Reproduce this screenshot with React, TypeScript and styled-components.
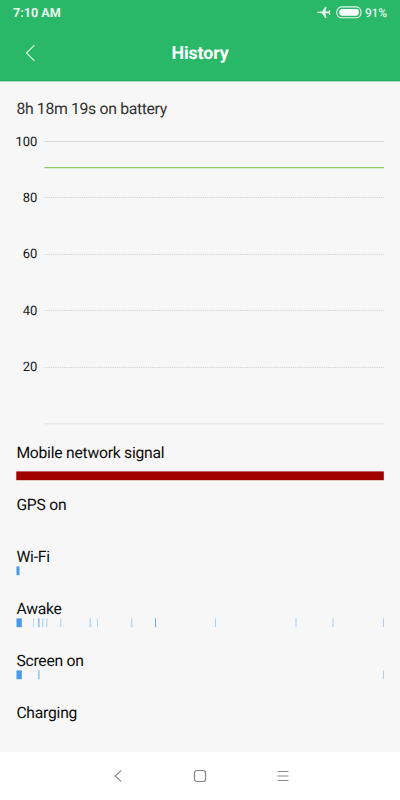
import React from "react";
import styled, { createGlobalStyle } from "styled-components";

const GlobalStyle = createGlobalStyle`
  * { box-sizing: border-box; }
  body {
    margin: 0;
    background: #f7f7f7;
    font-family: Roboto, "Liberation Sans", sans-serif;
    text-rendering: geometricPrecision;
  }
`;

const Screen = styled.div`
  width: 400px;
  height: 800px;
  display: flex;
  flex-direction: column;
  overflow: hidden;
  background: #f7f7f7;
  color: #111;
`;

const Header = styled.header`
  height: 82px;
  flex: none;
  background: #28b868;
  border-bottom: 1px solid #a5dfbf;
  box-shadow: inset 0 -1px 0 #1fae60;
  color: #fff;
`;

const StatusBar = styled.div`
  height: 25px;
  display: flex;
  align-items: center;
  justify-content: space-between;
  padding: 0 13px;
  color: #e9f8ef;
`;

const Clock = styled.span`
  font-size: 12.6px;
  line-height: 25px;
  padding-top: 1px;
  font-weight: 700;
`;

const StatusIcons = styled.div`
  display: flex;
  align-items: center;
`;

const Percent = styled.span`
  width: 22px;
  margin-left: 3px;
  padding-top: 1px;
  font-size: 12px;
  line-height: 25px;
  font-weight: 500;
  letter-spacing: -0.2px;
  white-space: nowrap;
`;

const TitleBar = styled.div`
  height: 56px;
  display: grid;
  grid-template-columns: 60px 1fr 60px;
  align-items: center;
`;

const BackButton = styled.button`
  display: flex;
  padding: 0 0 0 25px;
  border: 0;
  background: none;
`;

const Title = styled.h1`
  margin: 0;
  padding-top: 2px;
  text-align: center;
  font-size: 17.8px;
  line-height: 26px;
  font-weight: 700;
  letter-spacing: -0.1px;
`;

const Content = styled.main`
  flex: 1;
  min-height: 0;
  padding: 17px 16px 0;
`;

const Summary = styled.p`
  margin: 0;
  height: 21px;
  padding-left: 0.4px;
  font-size: 15.8px;
  line-height: 20px;
  letter-spacing: -0.34px;
  color: #303030;
`;

const Chart = styled.svg`
  display: block;
  width: 368px;
  height: 323px;
  font-size: 13px;
  fill: #151515;
`;

const Row = styled.section`
  height: 52px;
`;

const RowLabel = styled.div<{ $gap?: number }>`
  height: 19px;
  margin-bottom: ${(p) => p.$gap ?? 0}px;
  padding-left: 0.4px;
  font-size: 15.7px;
  line-height: 20px;
  letter-spacing: -0.24px;
  color: #0c0c0c;
`;

const Strip = styled.svg`
  display: block;
  width: 368px;
  height: 10px;
`;

const NavBar = styled.nav`
  height: 48px;
  flex: none;
  display: flex;
  justify-content: center;
  align-items: center;
  gap: 68px;
  background: #fff;
`;

type Mark = { x: number; w?: number; color: string };
type Usage = { label: string; gap?: number; marks: Mark[] };

const usages: Usage[] = [
  { label: "Mobile network signal", gap: 9, marks: [{ x: 0.3, w: 367.5, color: "#9f0000" }] },
  { label: "GPS on", marks: [] },
  { label: "Wi-Fi", marks: [{ x: 0.5, w: 3, color: "#469ae6" }] },
  {
    label: "Awake",
    marks: [
      { x: 0.5, w: 5.3, color: "#469ae6" },
      { x: 17, color: "#b9d9f4" },
      { x: 22, w: 1.6, color: "#8fc3f0" },
      { x: 26, w: 1.5, color: "#bedcf6" },
      { x: 30, w: 1.5, color: "#bedcf6" },
      { x: 44, w: 1.5, color: "#bedcf6" },
      { x: 73.5, w: 1.5, color: "#b3d7f5" },
      { x: 81, color: "#b3d7f5" },
      { x: 115, w: 1.5, color: "#b9d9f4" },
      { x: 139, color: "#69ade9" },
      { x: 199, color: "#abd1f2" },
      { x: 279, w: 2, color: "#cfe1f3" },
      { x: 316, w: 2, color: "#cfe1f3" },
      { x: 367, color: "#b3cfeb" },
    ],
  },
  {
    label: "Screen on",
    marks: [
      { x: 0.5, w: 5.3, color: "#469ae6" },
      { x: 22, w: 1.6, color: "#8fc3f0" },
      { x: 367, color: "#b3cfeb" },
    ],
  },
  { label: "Charging", marks: [] },
];

const levels = [
  { value: 100, y: 21.5 },
  { value: 80, y: 77.8 },
  { value: 60, y: 134 },
  { value: 40, y: 190.5 },
  { value: 20, y: 247 },
];

const AirplaneIcon = () => (
  <svg width="14" height="13" viewBox="0 0 14 13" fill="currentColor">
    <path d="M.3 5.8 5.1 5.6 8.2.8 9.6.9 8.3 5.5 11.6 5.6 12.4 3.9 13.3 3.9 12.9 6.4 13.3 8.9 12.4 8.9 11.6 7.2 8.3 7.3 9.6 11.9 8.2 12 5.1 7.2.3 7Z" />
  </svg>
);

const BatteryIcon = () => (
  <svg width="26" height="13" viewBox="0 0 26 13" fill="none">
    <rect x=".8" y=".9" width="24.2" height="10.8" rx="4.8" stroke="currentColor" strokeWidth="1.1" />
    <rect x="3.4" y="2.9" width="19.4" height="6.8" rx="2.4" fill="#fff" />
  </svg>
);

const IconGroup = styled.div`
  display: flex;
  gap: 5px;
`;

const History = () => (
  <Chart viewBox="0 0 368 323">
    {levels.map(({ value, y }, i) => (
      <g key={value}>
        <text x="21.4" y={y + 4.4} textAnchor="end">{value}</text>
        <line
          x1="28.3" x2="368" y1={Math.floor(y) + 0.5} y2={Math.floor(y) + 0.5}
          stroke={i === 0 ? "#dadada" : "#d4d4d4"}
          strokeDasharray={i === 0 ? undefined : "1.3 .9"}
        />
      </g>
    ))}
    <line x1="28.3" x2="368" y1="303.8" y2="303.8" stroke="#e3e3e3" />
    <line x1="28.3" x2="368" y1="47.7" y2="47.7" stroke="#8fc866" strokeWidth="1.3" />
  </Chart>
);

export default function App() {
  return (
    <>
      <GlobalStyle />
      <Screen>
        <Header>
          <StatusBar>
            <Clock>7:10 AM</Clock>
            <StatusIcons>
              <IconGroup>
                <AirplaneIcon />
                <BatteryIcon />
              </IconGroup>
              <Percent>91%</Percent>
            </StatusIcons>
          </StatusBar>
          <TitleBar>
            <BackButton aria-label="Back">
              <svg width="12" height="18" viewBox="0 0 12 18" fill="none" stroke="#e4f6ec" strokeWidth="1.15">
                <path d="M9.5 1.2 1.5 9 9.5 16.8" />
              </svg>
            </BackButton>
            <Title>History</Title>
          </TitleBar>
        </Header>
        <Content>
          <Summary>8h 18m 19s on battery</Summary>
          <History />
          {usages.map(({ label, gap, marks }) => (
            <Row key={label}>
              <RowLabel $gap={gap}>{label}</RowLabel>
              <Strip viewBox="0 0 368 10">
                {marks.map((m) => (
                  <rect key={m.x} x={m.x} y=".4" width={m.w ?? 1} height="8.8" fill={m.color} />
                ))}
              </Strip>
            </Row>
          ))}
        </Content>
        <NavBar>
          <svg width="16" height="16" viewBox="0 0 16 16" fill="none" stroke="#858585" strokeWidth="1.1">
            <path d="M12.2 2.4 6.3 8 12.2 13.6" />
          </svg>
          <svg width="14" height="14" viewBox="0 0 14 14" fill="none" stroke="#858585" strokeWidth="1.2">
            <rect x="1.5" y="1.5" width="11" height="11" rx="2.2" />
          </svg>
          <svg width="16" height="14" viewBox="0 0 16 14" stroke="#8a8a8a">
            <path d="M2.5 2.5h11M2.5 7h11M2.5 11.5h11" />
          </svg>
        </NavBar>
      </Screen>
    </>
  );
}
